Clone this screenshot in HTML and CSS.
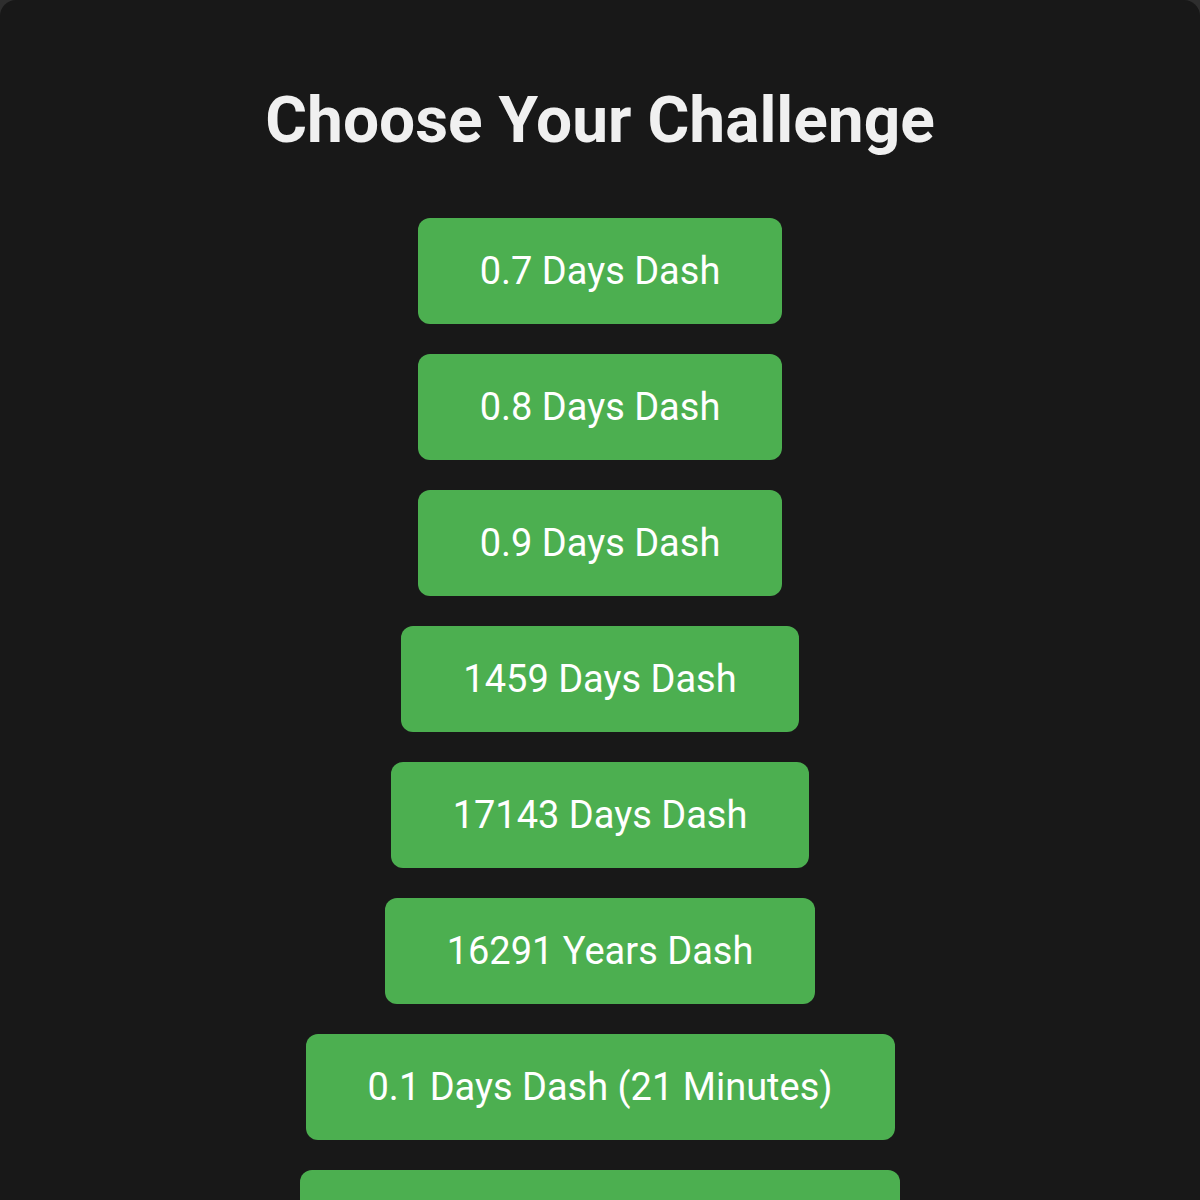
FILE: index.html
```html
<!DOCTYPE html>
<html lang="en">
<head>
<meta charset="utf-8">
<title>Choose Your Challenge</title>
<link rel="stylesheet" href="styles.css">
</head>
<body>
<main class="card">
  <h1 class="title">Choose Your Challenge</h1>
  <div class="options">
    <button class="option">0.7 Days Dash</button>
    <button class="option">0.8 Days Dash</button>
    <button class="option">0.9 Days Dash</button>
    <button class="option">1459 Days Dash</button>
    <button class="option">17143 Days Dash</button>
    <button class="option">16291 Years Dash</button>
    <button class="option">0.1 Days Dash (21 Minutes)</button>
    <button class="option">0.01 Days Dash (14.4 Minutes)</button>
  </div>
</main>
</body>
</html>
```
FILE: styles.css
```css
html, body {
  margin: 0;
  padding: 0;
}
body {
  background: #2e2e2e;
  font-family: Roboto, "Liberation Sans", Arial, sans-serif;
  min-height: 1200px;
  overflow: hidden;
}
.card {
  background: #181818;
  border-radius: 16px 16px 0 0;
  min-height: 1400px;
  padding: 83px 0 40px;
  box-sizing: border-box;
  display: flex;
  flex-direction: column;
  align-items: center;
}
.title {
  margin: 0 0 60px;
  font-size: 64px;
  font-weight: 700;
  line-height: 75px;
  color: #f0f0f0;
  text-align: center;
}
.options {
  display: flex;
  flex-direction: column;
  align-items: center;
  gap: 30px;
}
.option {
  box-sizing: border-box;
  max-width: 600px;
  min-height: 106px;
  background: #4caf50;
  color: #ffffff;
  border: none;
  border-radius: 12px;
  font-family: Roboto, "Liberation Sans", Arial, sans-serif;
  font-size: 38px;
  font-weight: 400;
  line-height: 46px;
  padding: 30px 62px;
  cursor: pointer;
}
```
